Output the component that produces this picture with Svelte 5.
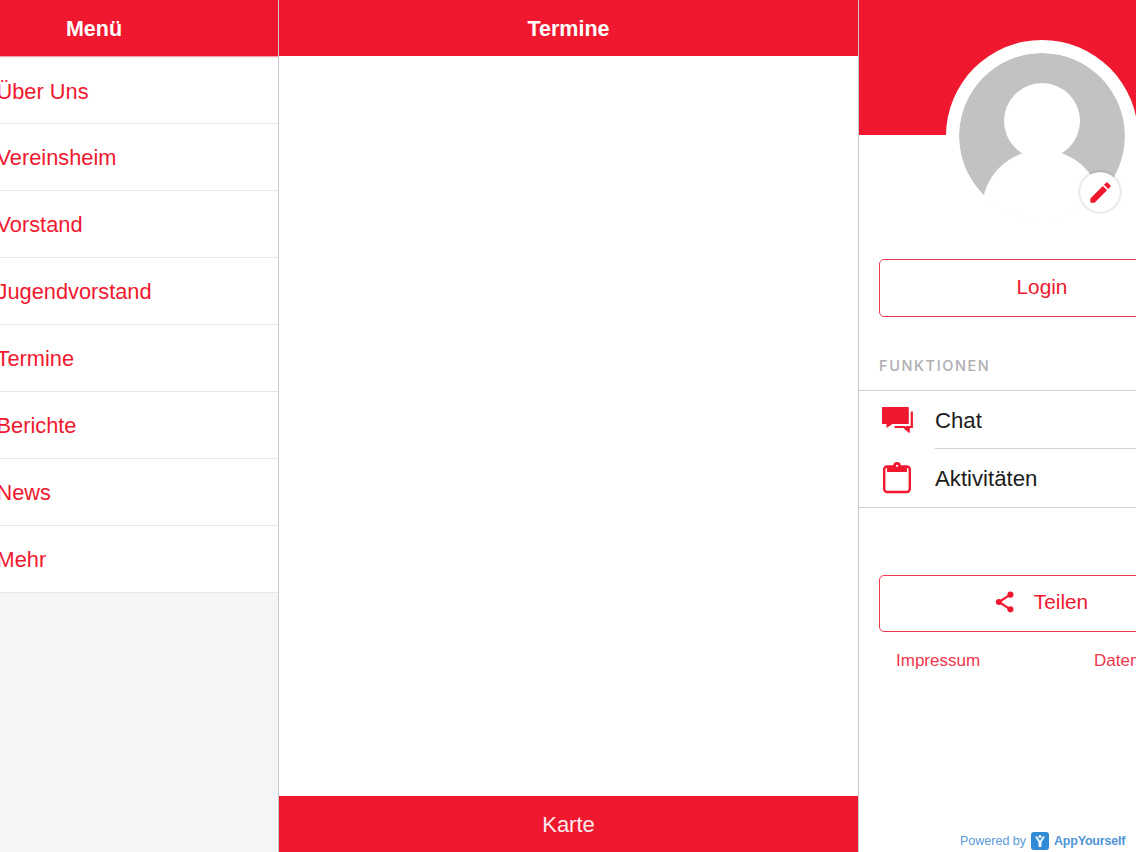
<script>
  const items = ['Über Uns', 'Vereinsheim', 'Vorstand', 'Jugendvorstand', 'Termine', 'Berichte', 'News', 'Mehr'];
</script>

<div class="root">
  <aside class="menu">
    <header class="bar"><span class="menu-title">Menü</span></header>
    <ul>
      {#each items as item}
        <li>{item}</li>
      {/each}
    </ul>
  </aside>

  <main class="center">
    <header class="bar">Termine</header>
    <div class="content"></div>
    <footer class="karte">Karte</footer>
  </main>

  <section class="side">
    <div class="band"></div>
    <div class="avatar">
      <div class="photo">
        <svg viewBox="0 0 166 166" width="166" height="166" aria-hidden="true">
          <circle cx="83" cy="83" r="83" fill="#c2c2c4" />
          <circle cx="83" cy="68" r="38" fill="#fff" />
          <circle cx="83" cy="157" r="60" fill="#fff" />
          <rect x="0" y="142" width="166" height="24" fill="#fff" />
        </svg>
      </div>
      <button class="edit" aria-label="Bearbeiten">
        <svg viewBox="0 0 24 24" width="27" height="27" aria-hidden="true">
          <path fill="#f0182f" d="M3 17.25V21h3.75L17.81 9.94l-3.75-3.75L3 17.25zM20.71 7.04a1 1 0 0 0 0-1.41l-2.34-2.34a1 1 0 0 0-1.41 0l-1.83 1.83 3.75 3.75 1.83-1.83z" />
        </svg>
      </button>
    </div>

    <div class="btn login">Login</div>

    <div class="section-label">FUNKTIONEN</div>
    <div class="list">
      <div class="row">
        <span class="ic">
          <svg viewBox="0 0 32 28" width="32" height="28" aria-hidden="true">
            <path fill="#f0182f" d="M0.500 1h25.500a.8.8 0 0 1 .8.8v15.500a.8.8 0 0 1-.8.8H10.500l-6 4v-4H.5a.5.5 0 0 1-.5-.5V1.500a.5.5 0 0 1 .5-.5z" />
            <path fill="none" stroke="#f0182f" stroke-width="2.200" d="M28.900 6.500h.9v14.500h-3.300v3.500l-4.500-3.500H12.500" />
            <path fill="#f0182f" d="M24.500 20h3v7.200l-6-5.200z" />
          </svg>
        </span>
        <span class="label sep">Chat</span>
      </div>
      <div class="row">
        <span class="ic">
          <svg viewBox="0 0 30 32" width="30" height="32" aria-hidden="true">
            <rect x="2.200" y="4.500" width="25.600" height="25.500" rx="3" fill="none" stroke="#f0182f" stroke-width="2.400" />
            <path fill="#f0182f" d="M5 4h20v6H5z" />
            <circle cx="15" cy="3.800" r="3.800" fill="#f0182f" />
            <circle cx="15" cy="3.800" r="1.100" fill="#fff" />
          </svg>
        </span>
        <span class="label">Aktivitäten</span>
      </div>
    </div>

    <div class="btn share">
      <svg viewBox="0 0 24 24" width="26" height="26" aria-hidden="true">
        <path fill="none" stroke="#f0182f" stroke-width="2" d="M16.500 5.500L6.500 12l10 6.500" />
        <circle cx="17" cy="5.200" r="2.800" fill="#f0182f" />
        <circle cx="6.300" cy="12" r="2.800" fill="#f0182f" />
        <circle cx="17" cy="18.800" r="2.800" fill="#f0182f" />
      </svg>
      <span>Teilen</span>
    </div>

    <div class="links">
      <span>Impressum</span>
      <span>Datenschutz</span>
    </div>

    <div class="powered">
      <span>Powered by</span>
      <svg viewBox="0 0 18 18" width="18" height="18" aria-hidden="true">
        <rect width="18" height="18" rx="3" fill="#2f8bd6" />
        <circle cx="9" cy="4.500" r="1.600" fill="#fff" />
        <path fill="#fff" d="M4 4.500h2L9 9l3-4.500h2L10.400 10.500V15H7.600V10.500z" />
      </svg>
      <span class="brand">AppYourself</span>
    </div>
  </section>
</div>

<style>
  :global(body) {
    margin: 0;
    background: #fff;
  }

  .root {
    display: flex;
    width: 1136px;
    height: 852px;
    overflow: hidden;
    font-family: "Liberation Sans", Arial, sans-serif;
    color: #f0182f;
  }

  .menu {
    flex: 0 0 279px;
    box-sizing: border-box;
    border-right: 1px solid #c8c8cc;
    background: #f5f5f7;
    overflow: hidden;
  }

  .bar {
    height: 56px;
    box-sizing: border-box;
    background: #f0182f;
    color: #fff;
    font-size: 21.500px;
    font-weight: 700;
    line-height: 58px;
    text-align: center;
  }

  .menu .bar {
    padding-right: 92px;
    padding-left: 2px;
    box-shadow: 0 1px 0 #f3a0aa;
  }

  ul {
    list-style: none;
    margin: 1.500px 0 0;
    padding: 0;
    background: #fff;
  }

  li {
    height: 66.875px;
    box-sizing: border-box;
    border-bottom: 1.500px solid #e6e6e9;
    text-indent: -3.500px;
    font-size: 21.800px;
    line-height: 68px;
  }

  .center {
    flex: 0 0 580px;
    display: flex;
    flex-direction: column;
    box-sizing: border-box;
    border-right: 1px solid #c8c8cc;
    background: #fff;
  }

  .content {
    flex: 1;
  }

  .karte {
    height: 56px;
    background: #f0182f;
    color: #fdeaec;
    font-size: 22px;
    line-height: 57px;
    text-align: center;
  }

  .side {
    flex: 0 0 366px;
    display: flex;
    flex-direction: column;
    background: #fff;
    height: 852px;
  }

  .band {
    height: 135px;
    background: #f0182f;
    flex: none;
  }

  .avatar {
    position: relative;
    flex: none;
    align-self: center;
    width: 192px;
    height: 192px;
    margin-top: -95px;
    border-radius: 50%;
    background: #fff;
  }

  .photo {
    position: absolute;
    left: 13px;
    top: 13px;
    width: 166px;
    height: 166px;
    border-radius: 50%;
    overflow: hidden;
  }

  .photo svg {
    display: block;
  }

  .edit {
    position: absolute;
    left: 134px;
    top: 132px;
    width: 40px;
    height: 40px;
    padding: 0;
    display: flex;
    align-items: center;
    justify-content: center;
    border: 0;
    border-radius: 50%;
    background: #fff;
    box-shadow: 0 0 3px rgba(0, 0, 0, 0.3);
  }

  .btn {
    flex: none;
    box-sizing: border-box;
    width: 326px;
    height: 57.500px;
    margin-left: 20px;
    padding-bottom: 2px;
    border: 1.500px solid #f0394d;
    border-radius: 5px;
    display: flex;
    align-items: center;
    justify-content: center;
    font-size: 20.800px;
  }

  .login {
    margin-top: 27px;
  }

  .section-label {
    flex: none;
    height: 73.500px;
    box-sizing: border-box;
    padding: 40px 0 0 20px;
    font-family: Inter, "Liberation Sans", sans-serif;
    font-size: 14.500px;
    font-weight: 500;
    letter-spacing: 1.600px;
    line-height: 18px;
    color: #aeaeb3;
  }

  .list {
    flex: none;
    border-top: 1.500px solid #d2d2d6;
    border-bottom: 1.500px solid #d2d2d6;
  }

  .row {
    display: flex;
    align-items: stretch;
    height: 58px;
  }

  .ic {
    flex: 0 0 76px;
    display: flex;
    align-items: center;
    padding-left: 23px;
    box-sizing: border-box;
  }

  .label {
    flex: 1;
    color: #1c1c20;
    font-size: 22.200px;
    line-height: 60px;
  }

  .sep {
    border-bottom: 1.500px solid #d2d2d6;
  }

  .share {
    margin-top: 66.500px;
    gap: 16px;
    padding-right: 4px;
  }

  .links {
    flex: none;
    display: flex;
    margin-top: 18.500px;
    padding-left: 37px;
    gap: 114px;
    font-size: 17px;
    line-height: 20px;
    color: #f0364a;
    white-space: nowrap;
  }

  .powered {
    margin-top: auto;
    margin-bottom: 2px;
    padding-left: 101px;
    display: flex;
    align-items: center;
    gap: 5px;
    font-size: 12.500px;
    line-height: 18px;
    color: #5a9ad8;
  }

  .brand {
    font-size: 12.500px;
    font-weight: 700;
    letter-spacing: -0.200px;
    color: #4f95d6;
  }
</style>
